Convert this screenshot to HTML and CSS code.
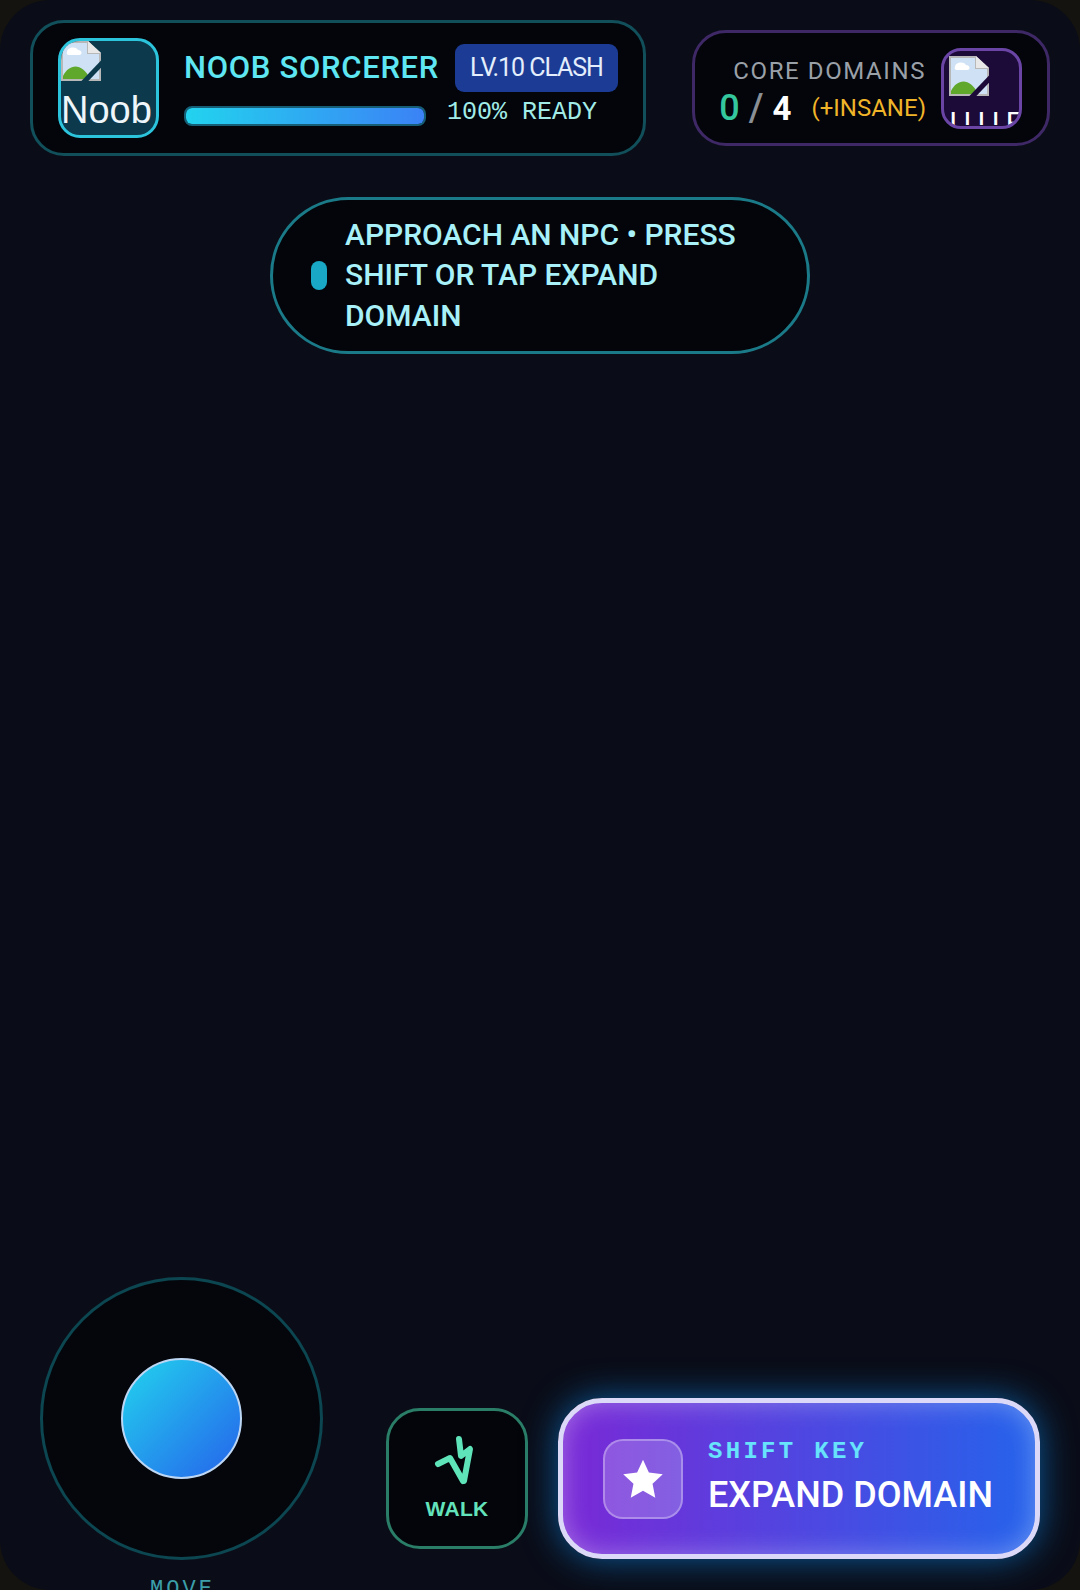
FILE: index.html
```html
<!DOCTYPE html>
<html lang="en">
<head>
    <meta charset="UTF-8">
    <meta name="viewport" content="width=device-width, initial-scale=1.0">
    <title>Noob Sorcerer</title>
    <link rel="stylesheet" href="styles.css">
</head>
<body>
<div class="game">
    <div class="hud">
        <div class="player-card">
            <div class="avatar">
                <svg class="broken-img" viewBox="0 0 40 40"><use href="#broken"></use></svg>
                <span class="avatar-alt">Noob</span>
            </div>
            <div class="player-info">
                <div class="player-top">
                    <span class="player-name">NOOB SORCERER</span>
                    <span class="level-badge">LV.10 CLASH</span>
                </div>
                <div class="player-bottom">
                    <div class="ready-bar"><div class="ready-fill"></div></div>
                    <span class="ready-text">100% READY</span>
                </div>
            </div>
        </div>

        <div class="domain-card">
            <div class="domain-info">
                <span class="domain-label">CORE DOMAINS</span>
                <div class="domain-count">
                    <span class="count-now">0</span>
                    <span class="count-sep">/</span>
                    <span class="count-max">4</span>
                    <span class="count-extra">(+INSANE)</span>
                </div>
            </div>
            <div class="domain-icon">
                <svg class="broken-img" viewBox="0 0 40 40"><use href="#broken"></use></svg>
                <span class="domain-alt">I I I I F</span>
            </div>
        </div>
    </div>

    <div class="hint-wrap">
        <div class="hint">
            <span class="hint-dot"></span>
            <span class="hint-text">APPROACH AN NPC • PRESS SHIFT OR TAP EXPAND DOMAIN</span>
        </div>
    </div>

    <div class="controls">
        <div class="move-col">
            <div class="joystick"><div class="knob"></div></div>
            <span class="move-label">MOVE</span>
        </div>
        <div class="walk-btn">
            <svg class="walk-icon" viewBox="0 0 60 60">
                <path d="M11 29 L23 23 L36 46 M32 4 L34 21 L43 14 L37 46"></path>
            </svg>
            <span class="walk-label">WALK</span>
        </div>
        <div class="expand-btn">
            <div class="star-box">
                <svg class="star" viewBox="0 0 24 24"><path d="M12 1.500l3.200 7 7.600.9-5.600 5.200 1.500 7.600L12 18.400l-6.700 3.800 1.500-7.600L1.200 9.400l7.600-.9z"></path></svg>
            </div>
            <div class="expand-text">
                <span class="expand-key">SHIFT KEY</span>
                <span class="expand-title">EXPAND DOMAIN</span>
            </div>
        </div>
    </div>
</div>

<svg class="defs" width="0" height="0">
    <symbol id="broken" viewBox="0 0 40 40">
        <path d="M0 0H27L40 12V40H0Z" fill="#b8b8b8"></path>
        <path d="M2 2H26V13H38V38H2Z" fill="#cfe2f5"></path>
        <path d="M6 11c0-5 9-6 11-2 4 0 5 5 1 5H8c-2 0-3-2-2-3z" fill="#fff"></path>
        <path d="M2 38V35C8 23 21 21 29 38Z" fill="#5fa82c"></path>
        <path d="M27 0L40 12H27Z" fill="#e8e8e8"></path>
        <path d="M22 42L42 21" stroke="currentColor" stroke-width="5"></path>
    </symbol>
</svg>
</body>
</html>
```

FILE: styles.css
```css
html, body {
    margin: 0;
    padding: 0;
    height: 100%;
    background: #14130f;
    overflow: hidden;
}

.game {
    width: 1080px;
    height: 1590px;
    background: #0a0d18;
    border-radius: 50px;
    overflow: hidden;
    display: flex;
    flex-direction: column;
    font-family: Roboto, "Liberation Sans", sans-serif;
}

.defs { position: absolute; }

/* top bar */
.hud {
    display: flex;
    justify-content: space-between;
    align-items: center;
    padding: 20px 30px 0 30px;
    height: 136px;
}

.player-card {
    width: 616px;
    height: 136px;
    box-sizing: border-box;
    display: flex;
    align-items: center;
    gap: 25px;
    padding: 0 25px;
    background: #03050a;
    border: 3px solid #114f5a;
    border-radius: 34px;
}

.avatar {
    width: 101px;
    height: 100px;
    flex: none;
    box-sizing: border-box;
    display: flex;
    flex-direction: column;
    overflow: hidden;
    color: #0c3a4c;
    background: #0c3a4c;
    border: 3px solid #2cc4dc;
    border-radius: 22px;
}

.broken-img {
    width: 40px;
    height: 40px;
    flex: none;
}

.avatar-alt {
    font-family: "Liberation Sans", sans-serif;
    font-size: 38px;
    line-height: 44px;
    color: #eef6fa;
    margin-top: 7px;
}

.player-info {
    display: flex;
    flex-direction: column;
    gap: 6px;
    padding-bottom: 6px;
}

.player-top {
    display: flex;
    align-items: center;
    gap: 16px;
}

.player-name {
    font-size: 31px;
    font-weight: 500;
    letter-spacing: 0.7px;
    color: #5ee6f3;
    white-space: nowrap;
}

.level-badge {
    width: 163px;
    height: 48px;
    display: flex;
    align-items: center;
    justify-content: center;
    background: #1c3b94;
    border-radius: 9px;
    font-size: 25px;
    letter-spacing: -1.050px;
    color: #e3edfb;
    white-space: nowrap;
}

.player-bottom {
    display: flex;
    align-items: center;
    gap: 21px;
}

.ready-bar {
    width: 242px;
    height: 20px;
    box-sizing: border-box;
    margin-top: 8px;
    background: #0c3a4c;
    border: 2px solid #155e75;
    border-radius: 8px;
    overflow: hidden;
}

.ready-fill {
    width: 100%;
    height: 100%;
    background: linear-gradient(90deg, #22d3ee, #3b82f6);
}

.ready-text {
    font-family: "Liberation Mono", monospace;
    font-size: 25px;
    color: #a2ece8;
    white-space: nowrap;
}

.domain-card {
    width: 358px;
    height: 116px;
    box-sizing: border-box;
    display: flex;
    align-items: center;
    justify-content: flex-end;
    gap: 15px;
    padding: 0 25px 0 0;
    background: #03050a;
    border: 3px solid #3f2866;
    border-radius: 34px;
}

.domain-info {
    display: flex;
    flex-direction: column;
    align-items: flex-end;
    gap: 4px;
    padding-top: 8px;
}

.domain-label {
    font-size: 24px;
    letter-spacing: 1.6px;
    color: #9aa0a8;
    white-space: nowrap;
}

.domain-count {
    display: flex;
    align-items: center;
    height: 38px;
    white-space: nowrap;
}

.count-now, .count-max {
    font-size: 33px;
    font-weight: 500;
}

.count-now { color: #34c79d; font-size: 36px; }
.count-max { color: #fff; font-weight: 700; }

.count-sep {
    font-size: 38px;
    font-weight: 500;
    line-height: 38px;
    color: #8a8f96;
    margin: 0 9px;
}

.count-extra {
    font-size: 24px;
    color: #f0b429;
    margin-left: 20px;
}

.domain-icon {
    width: 81px;
    height: 81px;
    flex: none;
    box-sizing: border-box;
    display: flex;
    flex-direction: column;
    overflow: hidden;
    padding: 5px 0 0 5px;
    color: #1c0a38;
    background: #1c0a38;
    border: 3px solid #6a45a6;
    border-radius: 20px;
}

/* only the top of the alt text shows, same as the broken image box */
.domain-alt {
    font-family: "Liberation Sans", sans-serif;
    font-size: 30px;
    word-spacing: -2.500px;
    line-height: 30px;
    height: 18px;
    overflow: hidden;
    color: #fff;
    margin-top: 11px;
    white-space: nowrap;
}

/* status pill */
.hint-wrap {
    display: flex;
    justify-content: center;
    margin-top: 41px;
    flex: 1;
    align-items: flex-start;
}

.hint {
    width: 540px;
    height: 157px;
    box-sizing: border-box;
    display: flex;
    align-items: center;
    gap: 18px;
    padding: 0 60px 0 38px;
    background: #03050a;
    border: 3px solid #1b7a88;
    border-radius: 80px;
}

.hint-dot {
    width: 16px;
    height: 29px;
    flex: none;
    background: #19a9c6;
    border-radius: 8px;
}

.hint-text {
    font-size: 30px;
    font-weight: 500;
    line-height: 40.500px;
    color: #a8f1f8;
}

/* bottom controls */
.controls {
    height: 313px;
    flex: none;
    overflow: hidden;
    display: flex;
    align-items: flex-start;
    padding-left: 40px;
}

.move-col {
    width: 283px;
    flex: none;
    display: flex;
    flex-direction: column;
    align-items: center;
    gap: 17px;
}

.joystick {
    width: 283px;
    height: 283px;
    box-sizing: border-box;
    display: flex;
    align-items: center;
    justify-content: center;
    background: #04060c;
    border: 3px solid #0c4650;
    border-radius: 50%;
}

.knob {
    width: 121px;
    height: 121px;
    box-sizing: border-box;
    background: linear-gradient(135deg, #22d3ee, #2563eb);
    border: 2px solid #bcd6f4;
    border-radius: 50%;
}

.move-label {
    font-family: "Liberation Mono", monospace;
    font-size: 22px;
    letter-spacing: 3px;
    color: #3c9ea9;
    padding-left: 2px;
}

.walk-btn {
    width: 142px;
    height: 141px;
    box-sizing: border-box;
    flex: none;
    margin: 131px 0 0 63px;
    display: flex;
    flex-direction: column;
    align-items: center;
    justify-content: center;
    gap: 2px;
    background: #03050a;
    border: 3px solid #2a7d67;
    border-radius: 34px;
}

.walk-icon {
    width: 60px;
    height: 60px;
}

.walk-icon path {
    fill: none;
    stroke: #5fe3b8;
    stroke-width: 6;
    stroke-linecap: round;
    stroke-linejoin: round;
}

.walk-label {
    font-family: "Liberation Sans", sans-serif;
    font-size: 21px;
    font-weight: 700;
    letter-spacing: 0.3px;
    color: #63e3bb;
    margin-bottom: 2px;
}

.expand-btn {
    width: 482px;
    height: 161px;
    box-sizing: border-box;
    flex: none;
    margin: 121px 0 0 30px;
    display: flex;
    align-items: center;
    gap: 25px;
    padding: 0 0 0 40px;
    background: linear-gradient(90deg, #7a29d6, #2563eb);
    border: 5px solid #dcd8f8;
    border-radius: 44px;
    box-shadow: 0 0 34px rgba(14, 140, 240, 0.6), inset 0 0 26px rgba(255, 255, 255, 0.32);
}

.star-box {
    width: 80px;
    height: 80px;
    box-sizing: border-box;
    flex: none;
    display: flex;
    align-items: center;
    justify-content: center;
    background: rgba(255, 255, 255, 0.2);
    border: 2px solid rgba(255, 255, 255, 0.3);
    border-radius: 20px;
}

.star {
    width: 44px;
    height: 44px;
    fill: #fff;
}

.expand-text {
    display: flex;
    flex-direction: column;
    gap: 9px;
    padding-bottom: 3px;
}

.expand-key {
    font-family: "Liberation Mono", monospace;
    font-size: 24px;
    font-weight: 700;
    letter-spacing: 3.300px;
    color: #67e3fb;
}

.expand-title {
    font-size: 36px;
    font-weight: 500;
    color: #fff;
    white-space: nowrap;
}
```
